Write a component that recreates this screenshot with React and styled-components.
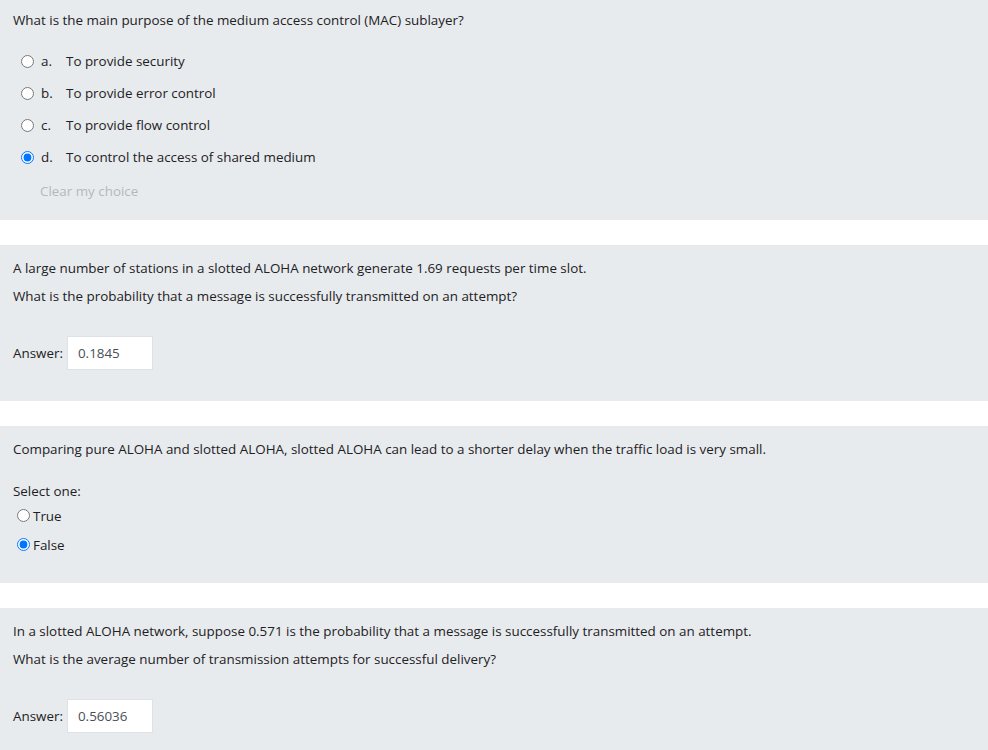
import React from 'react';
import styled, { createGlobalStyle } from 'styled-components';

const GlobalStyle = createGlobalStyle`
  html, body {
    margin: 0;
    padding: 0;
    background: #fff;
  }
  body {
    font-family: "Open Sans", "Noto Sans", sans-serif;
    font-size: 13.4px;
    color: #1d2125;
  }
`;

const Page = styled.div`
  display: flex;
  flex-direction: column;
  gap: 25px;
  width: 988px;
`;

const Panel = styled.div`
  background: #e8ebed;
  padding: ${(p) => p.pad || '13px 13px 31px'};
`;

const Text = styled.p`
  margin: 0 0 8px;
  line-height: 20px;
  &:last-child {
    margin-bottom: 0;
  }
`;

const OptionList = styled.div`
  display: flex;
  flex-direction: column;
  margin-top: 15px;
`;

const OptionRow = styled.label`
  display: flex;
  align-items: center;
  height: 32px;
  padding-left: 8px;
`;

const Radio = styled.input.attrs({ type: 'radio' })`
  width: 13px;
  height: 13px;
  margin: 0;
  flex-shrink: 0;
`;

const Letter = styled.span`
  width: 25px;
  margin-left: 7px;
`;

const ClearLink = styled.a`
  display: block;
  margin-top: 8px;
  padding-left: 27px;
  line-height: 20px;
  color: #b4b8bb;
  text-decoration: none;
`;

const AnswerRow = styled.div`
  display: flex;
  align-items: center;
  gap: 4px;
  margin-top: 30px;
`;

const AnswerBox = styled.div`
  width: 86px;
  height: 34px;
  box-sizing: border-box;
  padding: 0 10px;
  display: flex;
  align-items: center;
  background: #fff;
  border: 1px solid #dee2e6;
  color: #495057;
`;

const Prompt = styled.div`
  margin-top: 22px;
  line-height: 20px;
`;

const ChoiceRow = styled.label`
  display: flex;
  align-items: center;
  gap: 3px;
  height: 29px;
  padding-left: 4px;
`;

const options = [
  { key: 'a.', text: 'To provide security' },
  { key: 'b.', text: 'To provide error control' },
  { key: 'c.', text: 'To provide flow control' },
  { key: 'd.', text: 'To control the access of shared medium', checked: true },
];

function App() {
  return (
    <Page>
      <GlobalStyle />
      <Panel pad="10px 13px 19px">
        <Text>What is the main purpose of the medium access control (MAC) sublayer?</Text>
        <OptionList>
          {options.map((o) => (
            <OptionRow key={o.key}>
              <Radio name="q1" defaultChecked={o.checked} />
              <Letter>{o.key}</Letter>
              <span>{o.text}</span>
            </OptionRow>
          ))}
        </OptionList>
        <ClearLink href="#">Clear my choice</ClearLink>
      </Panel>

      <Panel>
        <Text>A large number of stations in a slotted ALOHA network generate 1.69 requests per time slot.</Text>
        <Text>What is the probability that a message is successfully transmitted on an attempt?</Text>
        <AnswerRow>
          <span>Answer:</span>
          <AnswerBox>0.1845</AnswerBox>
        </AnswerRow>
      </Panel>

      <Panel pad="13px 13px 24px">
        <Text>Comparing pure ALOHA and slotted ALOHA, slotted ALOHA can lead to a shorter delay when the traffic load is very small.</Text>
        <Prompt>Select one:</Prompt>
        <ChoiceRow>
          <Radio name="q3" />
          <span>True</span>
        </ChoiceRow>
        <ChoiceRow>
          <Radio name="q3" defaultChecked />
          <span>False</span>
        </ChoiceRow>
      </Panel>

      <Panel>
        <Text>In a slotted ALOHA network, suppose 0.571 is the probability that a message is successfully transmitted on an attempt.</Text>
        <Text>What is the average number of transmission attempts for successful delivery?</Text>
        <AnswerRow>
          <span>Answer:</span>
          <AnswerBox>0.56036</AnswerBox>
        </AnswerRow>
      </Panel>
    </Page>
  );
}

export default App;
